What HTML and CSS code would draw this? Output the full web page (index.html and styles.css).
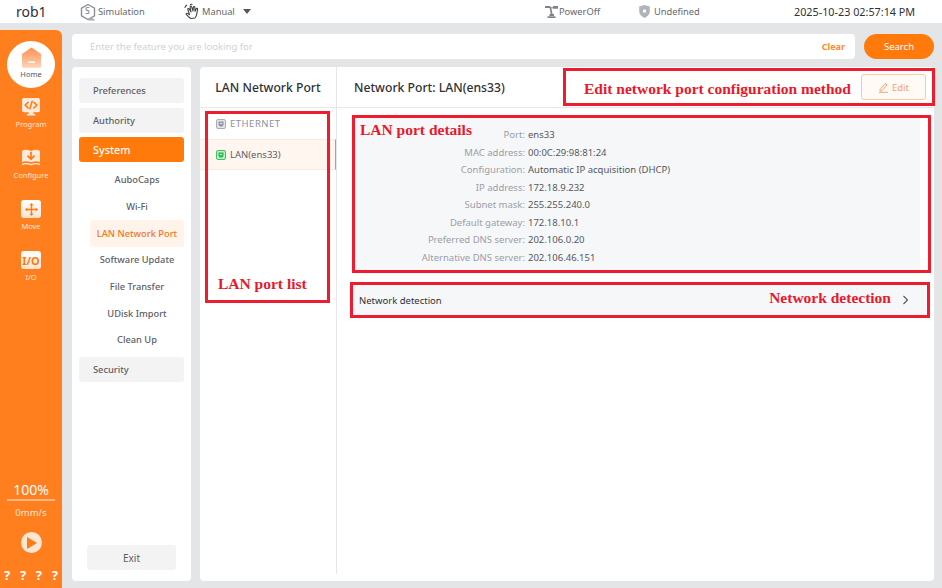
FILE: index.html
```html
<!DOCTYPE html>
<html lang="en">
<head>
<meta charset="utf-8">
<title>LAN Network Port</title>
<link rel="stylesheet" href="styles.css">
</head>
<body>
<div class="app">
  <header class="topbar">
    <div class="robot">rob1</div>
    <div class="status status-sim">
      <svg class="ic" width="18" height="18" viewBox="0 0 18 18"><path d="M9 1.500l6.500 3.700v7.600L9 16.500l-6.500-3.700V5.200z" fill="#fff" stroke="#8b8f96" stroke-width="1.400"/><path d="M9 17.500c0-1.800 1.200-2.900 2.700-2.900 1 0 1.700.5 2.100 1.200 1.200 0 2.200.5 2.200 1.700z" fill="#a9adb3"/></svg>
      <span class="sim-s">S</span>
      <span>Simulation</span>
    </div>
    <div class="status status-manual">
      <svg class="ic hand" width="17" height="17" viewBox="0 0 17 17" fill="none" stroke="#3c3f44" stroke-width="1.100" stroke-linecap="round" stroke-linejoin="round"><path d="M7 15.500c-1.500-.5-3-2-4.500-3.800-.6-.8-.4-1.500.4-1.500.7 0 1.600.7 2.600 1.500L3.800 6.500c-.3-.9 1-1.400 1.500-.5l1.700 3-.9-5c-.2-1 1.200-1.300 1.500-.3L9 8l.3-3.700c.1-1 1.400-1 1.500 0l.2 4 1.200-2.600c.4-.8 1.600-.4 1.400.5l-.9 5c-.2 1.500-.9 2.800-1.700 3.800z"/><path d="M1 4.500c.2-1 .8-1.800 1.700-2.300M6.500 1.500c.5-.3 1-.4 1.600-.2"/></svg>
      <span>Manual</span>
      <span class="caret"></span>
    </div>
    <div class="status status-power">
      <svg class="ic" width="14" height="14" viewBox="0 0 14 14" fill="#7f8389"><path d="M0 1h5.500v1.200H8V1h5v2.800H8V3.200H6.300L7.600 9H9v2H4.500V9h1.300L4.600 3H0z"/><rect x="2.500" y="11.300" width="8" height="1.700"/></svg>
      <span>PowerOff</span>
    </div>
    <div class="status status-undef">
      <svg class="ic" width="11" height="13" viewBox="0 0 11 13"><path d="M5.500 0l5.300 1.600v4.900c0 3-2.400 4.900-5.300 6.500C2.600 11.400.2 9.500.2 6.500V1.600z" fill="#b0b4ba"/><rect x="4" y="4.500" width="3" height="3" rx=".6" fill="#fff"/></svg>
      <span>Undefined</span>
    </div>
    <div class="clock">2025-10-23 02:57:14 PM</div>
  </header>

  <div class="workspace">
    <nav class="rail">
      <div class="home">
        <svg width="21" height="21" viewBox="0 0 21 21"><defs><linearGradient id="hg" x1="0" y1="0" x2="0" y2="1"><stop offset="0" stop-color="#ff8f4a"/><stop offset="1" stop-color="#ffd3b8"/></linearGradient></defs><path d="M10.500 .5L20 7v12.500a1.200 1.200 0 0 1-1.200 1.200H2.200A1.200 1.200 0 0 1 1 19.500V7z" fill="url(#hg)"/><rect x="7" y="14.500" width="7" height="1.400" fill="#fff"/></svg>
        <span>Home</span>
      </div>
      <div class="rail-item item-program">
        <svg class="glyph" width="20" height="19" viewBox="0 0 20 19"><path d="M2.500 0h15A2 2 0 0 1 19.500 2v11a2 2 0 0 1-2 2h-5v2h2v1.500h-9V17h2v-2h-5A2 2 0 0 1 .5 13V2A2 2 0 0 1 2.500 0z" fill="#ffe9d8"/><path d="M7 4.500L3.800 7.500 7 10.500M13 4.500l3.200 3L13 10.500M11.200 3.500L8.800 11.500" fill="none" stroke="#ff7a14" stroke-width="1.600" stroke-linecap="round" stroke-linejoin="round"/></svg>
        <span>Program</span>
      </div>
      <div class="rail-item">
        <svg class="glyph" width="20" height="19" viewBox="0 0 20 19"><path d="M.5 2C3 .5 6 .5 10 2c4-1.500 7-1.500 9.500 0v12C17 12.500 14 12.500 10 14 6 12.500 3 12.500 .5 14z" fill="#ffe9d8"/><path d="M.5 16.500C3 15 6 15 10 16.500c4-1.500 7-1.500 9.500 0" fill="none" stroke="#ffe9d8" stroke-width="1.300"/><path d="M10 3.500v7M6.800 7.500L10 10.800l3.200-3.300" fill="none" stroke="#ff7a14" stroke-width="1.800" stroke-linecap="round" stroke-linejoin="round"/></svg>
        <span>Configure</span>
      </div>
      <div class="rail-item">
        <span class="tile"><svg width="13" height="13" viewBox="0 0 14 14" fill="#ff7a14"><path d="M7 0l2.200 2.500H7.800v3.700h3.700V4.800L14 7l-2.500 2.200V7.800H7.800v3.700h1.400L7 14l-2.200-2.500h1.400V7.800H2.500v1.400L0 7l2.500-2.200v1.400h3.700V2.500H4.800z"/></svg></span>
        <span>Move</span>
      </div>
      <div class="rail-item">
        <span class="tile tile-io">I/O</span>
        <span>I/O</span>
      </div>
      <div class="rail-fill"></div>
      <div class="speed">100%</div>
      <div class="mms">0mm/s</div>
      <div class="play"><svg width="10" height="12" viewBox="0 0 10 12"><path d="M0 0l10 6-10 6z" fill="#ff7a14"/></svg></div>
      <div class="unknown"><span>?</span><span>?</span><span>?</span><span>?</span></div>
    </nav>

    <div class="content">
      <div class="searchrow">
        <div class="searchbox">
          <span class="placeholder">Enter the feature you are looking for</span>
          <span class="clear">Clear</span>
        </div>
        <div class="searchbtn">Search</div>
      </div>
      <div class="panels">
        <aside class="menu">
          <div class="menu-group">Preferences</div>
          <div class="menu-group">Authority</div>
          <div class="menu-group active">System</div>
          <div class="sub">
            <div class="sub-item">AuboCaps</div>
            <div class="sub-item">Wi-Fi</div>
            <div class="sub-item current">LAN Network Port</div>
            <div class="sub-item">Software Update</div>
            <div class="sub-item">File Transfer</div>
            <div class="sub-item">UDisk Import</div>
            <div class="sub-item">Clean Up</div>
          </div>
          <div class="menu-group">Security</div>
          <div class="menu-fill"></div>
          <div class="exit">Exit</div>
        </aside>
        <main class="main">
          <section class="ports">
            <h2 class="ports-title">LAN Network Port</h2>
            <div class="port">
              <svg width="10" height="10" viewBox="0 0 10 10"><rect x=".5" y=".5" width="9" height="9" rx="1.500" fill="#e3e5e8" stroke="#a9aeb6"/><path d="M2.500 2.500h5V6L6 7.500H4L2.500 6z" fill="#8d9199"/><rect x="3.800" y="3.800" width="2.400" height="1.400" fill="#e3e5e8"/></svg>
              <span class="eth">ETHERNET</span>
            </div>
            <div class="port selected">
              <svg width="10" height="10" viewBox="0 0 10 10"><rect x=".5" y=".5" width="9" height="9" rx="1.500" fill="#bdf0ca" stroke="#3ec45e"/><path d="M2.500 2.500h5V6L6 7.500H4L2.500 6z" fill="#2bb04c"/><rect x="3.800" y="3.800" width="2.400" height="1.400" fill="#bdf0ca"/></svg>
              <span>LAN(ens33)</span>
            </div>
          </section>
          <section class="detail">
            <div class="detail-head">
              <h2 class="detail-title">Network Port: LAN(ens33)</h2>
              <div class="edit">
                <svg width="11" height="11" viewBox="0 0 11 11" fill="none" stroke="#f6a26b" stroke-width="1"><path d="M2 7.500L7.500 1.500l1.500 1.500L3.500 9H2zM1 10.300h9"/></svg>
                <span>Edit</span>
              </div>
            </div>
            <div class="info">
              <div class="row"><span class="k">Port:</span><span class="v">ens33</span></div>
              <div class="row"><span class="k">MAC address:</span><span class="v">00:0C:29:98:81:24</span></div>
              <div class="row"><span class="k">Configuration:</span><span class="v">Automatic IP acquisition (DHCP)</span></div>
              <div class="row"><span class="k">IP address:</span><span class="v">172.18.9.232</span></div>
              <div class="row"><span class="k">Subnet mask:</span><span class="v">255.255.240.0</span></div>
              <div class="row"><span class="k">Default gateway:</span><span class="v">172.18.10.1</span></div>
              <div class="row"><span class="k">Preferred DNS server:</span><span class="v">202.106.0.20</span></div>
              <div class="row"><span class="k">Alternative DNS server:</span><span class="v">202.106.46.151</span></div>
            </div>
            <div class="detect">
              <span>Network detection</span>
              <svg width="7" height="10" viewBox="0 0 7 10" fill="none" stroke="#55585e" stroke-width="1.100"><path d="M1.500 1l4 4-4 4"/></svg>
            </div>
          </section>
        </main>
      </div>
    </div>
  </div>

  <div class="note note-edit">Edit network port configuration method</div>
  <div class="note note-list">LAN port list</div>
  <div class="note note-details">LAN port details</div>
  <div class="note note-detect">Network detection</div>
</div>
</body>
</html>
```

FILE: styles.css
```css
* { box-sizing: border-box; }
html, body { margin: 0; height: 100%; }
body { background: #e4e5e7; font-family: "Noto Sans", "Liberation Sans", sans-serif; color: #3c3f44; overflow: hidden; }
.app { position: relative; width: 942px; height: 588px; display: flex; flex-direction: column; }

.topbar { height: 23px; background: #fff; position: relative; flex: none; display: flex; align-items: center; font-size: 9.300px; color: #65686e; }
.robot { width: 79px; padding-left: 16px; font-size: 14px; color: #2f3135; }
.status { display: flex; align-items: center; gap: 1px; position: relative; }
.status-sim { width: 105px; }
.status-manual { width: 361px; }
.status-power { width: 94px; gap: 0; }
.status-undef { width: 155px; gap: 4px; }
.sim-s { position: absolute; left: 6px; top: 2px; font-size: 8.500px; color: #70747a; }
.caret { width: 0; height: 0; margin-left: 7px; border: 4px solid transparent; border-top: 5px solid #55585e; border-bottom: 0; }
.clock { font-size: 10.800px; color: #2f3135; white-space: nowrap; }

.workspace { flex: 1; display: flex; gap: 10px; padding-top: 7px; min-height: 0; }
.rail { width: 62px; background: #ff7f1e; border-radius: 0 6px 0 0; display: flex; flex-direction: column; align-items: center; color: #ffe6d2; font-size: 7.500px; padding-top: 11px; }
.home { width: 48px; height: 47px; border-radius: 50%; background: #fff; color: #55585e; display: flex; flex-direction: column; align-items: center; padding-top: 6px; gap: 1px; }
.rail-item { display: flex; flex-direction: column; align-items: center; height: 31px; margin-top: 20px; }
.rail-item span:last-child { line-height: 10px; margin-top: 3px; }
.item-program { margin-top: 10px; }
.glyph { flex: none; height: 18px; }
.tile { width: 20px; height: 18px; flex: none; background: linear-gradient(#fff, #ffe3cf); border-radius: 3px; display: flex; align-items: center; justify-content: center; margin-top: 0 !important; line-height: normal !important; }
.tile-io { color: #ff7a14; font-size: 11px; font-weight: 700; }
.rail-fill { flex: 1; }
.speed { width: 48px; text-align: center; color: #fff; font-size: 14px; line-height: 19px; border-bottom: 2px solid #ffb784; }
.mms { margin-top: 5px; font-size: 9.500px; line-height: 13px; color: #ffe6d2; }
.play { width: 21px; height: 21px; margin-top: 13px; border-radius: 50%; background: #ffe6d2; display: flex; align-items: center; justify-content: center; padding-left: 2px; }
.unknown { width: 62px; margin-top: 14px; height: 21px; padding: 0 4px; display: flex; justify-content: space-between; color: #fff; font-weight: 700; font-size: 13px; line-height: 17px; }

.content { flex: 1; min-width: 0; display: flex; flex-direction: column; padding: 4px 8px 7px 0; gap: 8px; }
.searchrow { display: flex; height: 25px; gap: 9px; flex: none; }
.searchbox { flex: 1; background: #fff; border-radius: 4px; display: flex; align-items: center; justify-content: space-between; padding: 0 10px 0 18px; font-size: 9.500px; }
.placeholder { color: #cfd1d5; }
.clear { color: #ff8a2e; font-weight: 700; font-size: 9px; }
.searchbtn { width: 70px; background: #ff7a0a; border-radius: 13px; color: #fff; font-size: 9.500px; display: flex; align-items: center; justify-content: center; }

.panels { flex: 1; display: flex; gap: 9px; min-height: 0; }
.menu { width: 119px; background: #fff; border-radius: 4px; padding: 11px 7px 11px; display: flex; flex-direction: column; font-size: 9.300px; }
.menu-group { height: 25px; margin-bottom: 4.500px; flex: none; background: #f3f3f4; border-radius: 3px; padding-left: 14px; display: flex; align-items: center; color: #5b5e64; font-weight: 500; }
.menu-group.active { background: #ff7a0a; color: #fff; font-size: 10.800px; margin-bottom: 0; }
.sub { display: flex; flex-direction: column; align-items: flex-end; margin-bottom: 4px; padding-top: 4.500px; }
.sub-item { width: 94px; height: 26.700px; display: flex; align-items: center; justify-content: center; color: #5b5e64; font-weight: 500; }
.sub-item.current { background: #fff3ea; border-radius: 3px; color: #f0761c; }
.menu-fill { flex: 1; }
.exit { height: 25px; width: 89px; margin: 0 0 0 8px; flex: none; background: #f3f3f4; border-radius: 3px; display: flex; align-items: center; justify-content: center; color: #5b5e64; font-size: 10px; }

.main { flex: 1; background: #fff; border-radius: 4px; display: flex; padding-bottom: 7px; min-width: 0; }
.ports { width: 137px; border-right: 1px solid #e6e7e9; flex: none; }
.ports-title { margin: 0; height: 41px; border-bottom: 1px solid #e6e7e9; font-size: 12.200px; font-weight: 500; color: #2f3135; display: flex; align-items: center; justify-content: center; }
.port { height: 31px; display: flex; align-items: center; gap: 4px; padding-left: 16px; font-size: 9.500px; color: #8d9199; }
.eth { letter-spacing: .5px; }
.port.selected { background: #fff6f0; border-top: 1px solid #f6ece5; border-bottom: 1px solid #f6ece5; border-right: 1px solid #ee8a4c; color: #5b5e64; }

.detail { flex: 1; min-width: 0; }
.detail-head { height: 41px; border-bottom: 1px solid #e6e7e9; display: flex; align-items: center; justify-content: space-between; padding: 0 8px 0 17px; }
.detail-title { margin: 0; font-size: 12.200px; font-weight: 500; color: #2f3135; }
.edit { width: 65px; height: 26px; border: 1px solid #f8c9a8; border-radius: 3px; background: #fffaf6; display: flex; align-items: center; justify-content: center; gap: 3px; color: #f6a26b; font-size: 9.500px; }
.info { margin: 8px 14px 0 15px; height: 158px; background: #f6f7f9; padding: 10px 0 0; font-size: 9.500px; }
.row { height: 17.500px; display: flex; align-items: center; gap: 3px; }
.k { width: 173px; text-align: right; color: #9a9ea5; white-space: nowrap; }
.v { color: #55585e; white-space: nowrap; }
.detect { margin: 10px 8px 0 15px; height: 32px; background: #f6f7f9; display: flex; align-items: center; justify-content: space-between; padding: 0 17px 0 7px; font-size: 9.500px; color: #2f3135; }

.note { position: absolute; border: 3px solid #ed1c2e; color: #e8192c; font-family: "Liberation Serif", serif; font-weight: 700; font-size: 15.500px; line-height: 18px; white-space: nowrap; }
.note-edit { left: 563px; top: 68px; width: 372px; height: 38px; padding: 9px 0 0 18px; }
.note-list { left: 205px; top: 111px; width: 125px; height: 192px; padding: 161px 0 0 10px; }
.note-details { left: 352px; top: 115px; width: 579px; height: 158px; padding: 3px 0 0 5px; }
.note-detect { left: 350px; top: 282px; width: 580px; height: 36px; padding: 4px 36px 0 0; text-align: right; }
```
